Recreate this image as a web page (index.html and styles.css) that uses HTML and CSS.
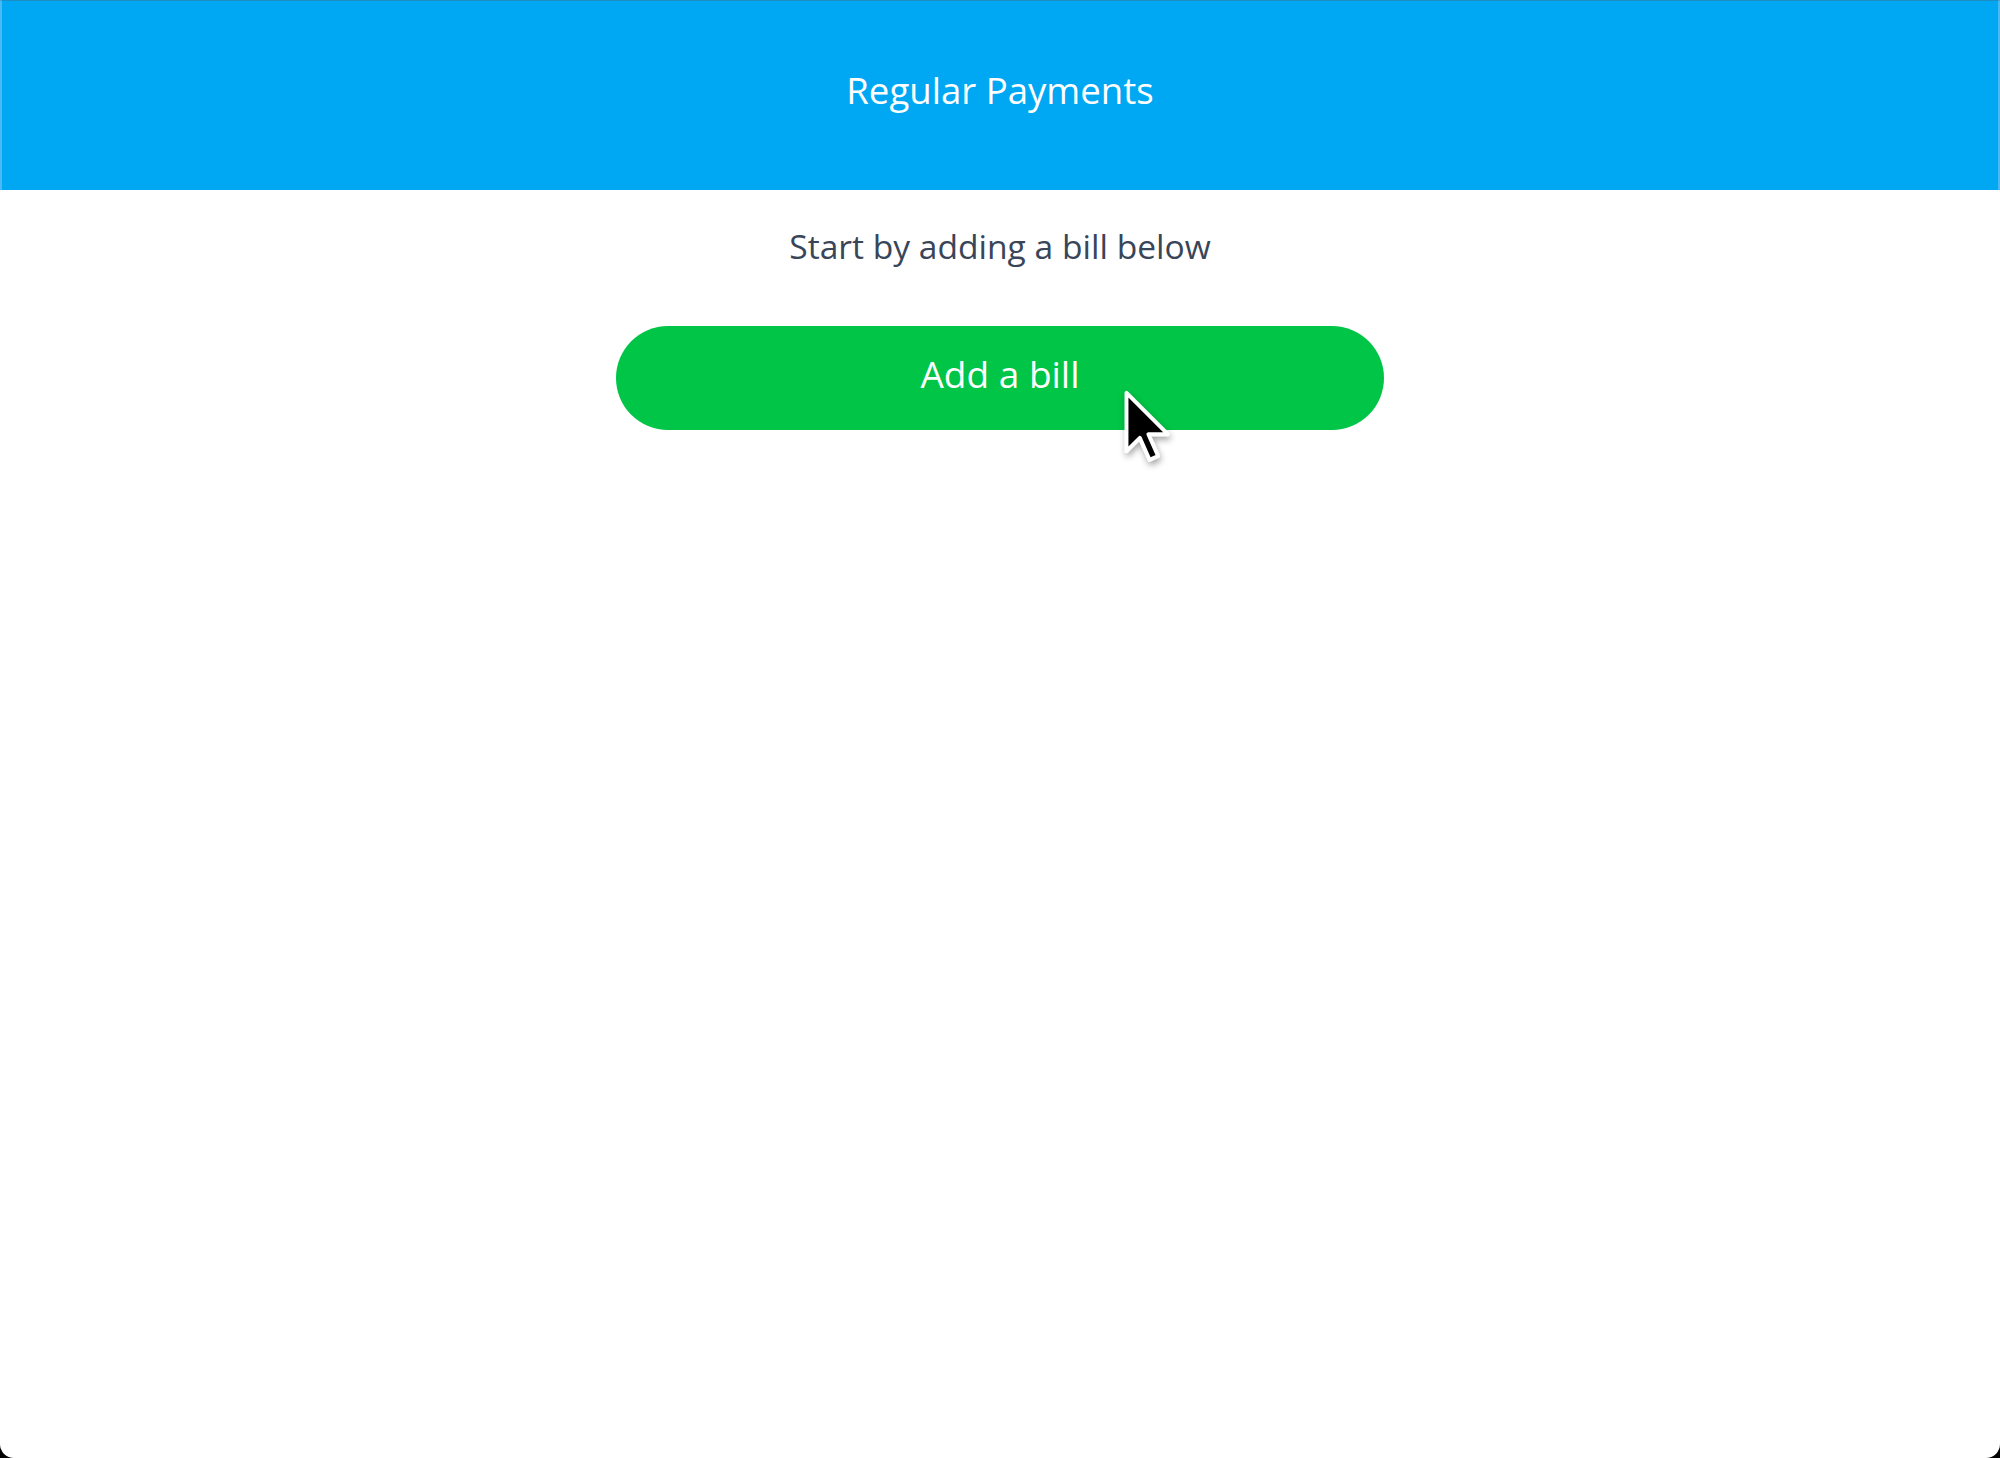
FILE: index.html
```html
<!DOCTYPE html>
<html>
<head>
<meta charset="utf-8">
<link rel="stylesheet" href="styles.css">
</head>
<body>
<div class="window">
  <header class="topbar">
    <h1 class="title">Regular Payments</h1>
  </header>
  <main class="content">
    <p class="hint">Start by adding a bill below</p>
    <button class="add-btn">Add a bill</button>
  </main>
  <svg class="cursor" width="68" height="98" viewBox="0 0 56 80" xmlns="http://www.w3.org/2000/svg">
    <defs>
      <filter id="sh" x="-30%" y="-30%" width="160%" height="160%">
        <feDropShadow dx="1" dy="3" stdDeviation="2.5" flood-color="#000" flood-opacity="0.35"/>
      </filter>
    </defs>
    <path d="M7 7 L7 55 L18 44 L26 62 L33 59 L25 41 L41 41 Z" fill="#000" stroke="#fff" stroke-width="3.2" stroke-linejoin="round" filter="url(#sh)"/>
  </svg>
</div>
</body>
</html>
```
FILE: styles.css
```css
html {
  background: #000;
}
body {
  margin: 0;
  font-family: "Open Sans", "Noto Sans", sans-serif;
}
.window {
  position: relative;
  height: 1458px;
  background: #fff;
  border-radius: 0 0 14px 14px;
  overflow: hidden;
  display: flex;
  flex-direction: column;
}
.topbar {
  height: 190px;
  box-sizing: border-box;
  background: #00a8f3;
  border-top: 1px solid #1f8cc2;
  border-left: 2px solid #4db9f2;
  border-right: 2px solid #4db9f2;
  display: flex;
  justify-content: center;
  padding-top: 71px;
}
.title {
  margin: 0;
  font-size: 36.6px;
  line-height: 37px;
  font-weight: 400;
  color: #fff;
}
.content {
  display: flex;
  flex-direction: column;
  align-items: center;
}
.hint {
  margin: 36px 0 0;
  font-size: 33.6px;
  line-height: 40px;
  color: #394558;
}
.add-btn {
  margin-top: 60px;
  width: 768px;
  height: 104px;
  border: none;
  border-radius: 52px;
  background: #00c546;
  color: #fff;
  font-family: "Open Sans", "Noto Sans", sans-serif;
  font-size: 37px;
  line-height: 95px;
  padding: 0 0 9px;
}
.cursor {
  position: absolute;
  left: 1118px;
  top: 384px;
}
```
